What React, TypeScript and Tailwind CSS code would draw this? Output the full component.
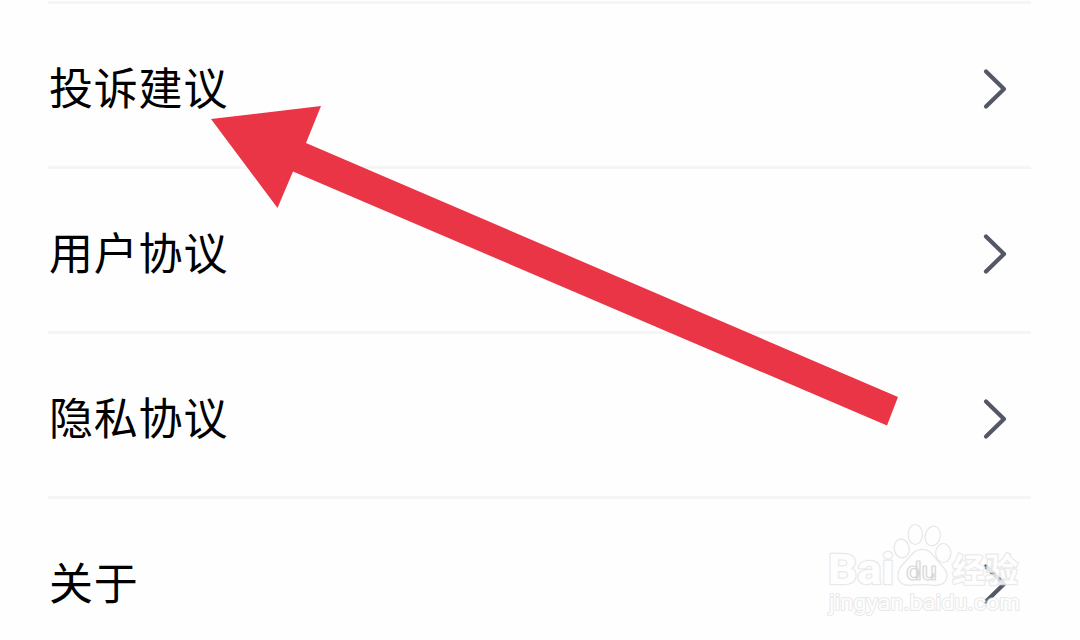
import React from 'react';

interface MenuItemProps {
  label: string;
}

const menuItems = ['投诉建议', '用户协议', '隐私协议', '关于'];

const MenuItem: React.FC<MenuItemProps> = ({ label }) => {
  return (
    <li className="flex h-[165px] items-center justify-between border-t-[3px] border-[#f5f5f5] pr-[22px]">
      <span className="ml-px pt-px text-[44px] leading-none tracking-[0.8px] text-black">{label}</span>
      <svg className="mt-2 h-11 w-7" viewBox="0 0 28 44" fill="none">
        <path
          d="M5 4.5 L23 22 L5 39.5"
          stroke="#535766"
          strokeWidth="4.2"
          strokeLinecap="round"
          strokeLinejoin="round"
        />
      </svg>
    </li>
  );
};

const Arrow: React.FC = () => (
  <svg className="absolute inset-0 h-[640px] w-[1080px]" viewBox="0 0 1080 640">
    <polygon points="211,119 321,106 306,143 898,397 887,425.5 293,171.5 277.5,208" fill="#ea3546" />
  </svg>
);

const Watermark: React.FC = () => (
  <svg
    className="absolute left-[810px] top-[510px] h-[130px] w-[240px]"
    viewBox="0 0 240 130"
    fill="#fefefe"
    stroke="#e6e6e6"
    strokeWidth="1.2"
  >
    {/* Paw */}
    <ellipse cx="91.7" cy="38.5" rx="7.5" ry="9.5" transform="rotate(-10 91.7 38.5)" />
    <ellipse cx="105.3" cy="24.5" rx="7.2" ry="10" />
    <ellipse cx="122.7" cy="26" rx="7.5" ry="10" transform="rotate(12 122.7 26)" />
    <ellipse cx="133.3" cy="43" rx="7.7" ry="9.5" />
    <path d="M112 39.3 C104 39.3 101 46 96 51 C90 57 88 60 88 66 C88 73 94 76 101 75.2 C109 74.5 115 74.5 122 75.2 C131 76.5 137 73 137 65 C137 59 131 56 127 50 C122 44 120 39.3 112 39.3 Z" />
    {/* Lettering, edge painted behind the fill */}
    <g
      className="opacity-85 [paint-order:stroke]"
      strokeWidth="2.4"
      strokeLinejoin="round"
      fontFamily="Roboto, sans-serif"
    >
      <text x="18" y="74" fontSize="43" fontWeight="800" textLength="66" lengthAdjust="spacingAndGlyphs">
        Bai
      </text>
      <text
        x="142"
        y="72"
        fontSize="33"
        fontWeight="700"
        fontFamily='"Noto Sans CJK SC", sans-serif'
        textLength="66"
        lengthAdjust="spacingAndGlyphs"
      >
        经验
      </text>
    </g>
    <g fontFamily="Roboto, sans-serif" strokeLinejoin="round">
      <text
        x="96"
        y="70"
        fontSize="25"
        fontWeight="500"
        stroke="#d8d8d8"
        textLength="31"
        lengthAdjust="spacingAndGlyphs"
      >
        du
      </text>
      <text
        x="19"
        y="100"
        fontSize="22.5"
        className="[paint-order:stroke]"
        stroke="#d0d0d0"
        strokeOpacity="0.45"
        strokeWidth="2.2"
        textLength="191"
        lengthAdjust="spacingAndGlyphs"
      >
        jingyan.baidu.com
      </text>
    </g>
  </svg>
);

export default function App() {
  return (
    <div className="relative h-[640px] w-[1080px] overflow-hidden bg-[#fefefe] font-['Noto_Sans_CJK_SC',sans-serif]">
      <ul className="mx-12 mt-px w-[983px]">
        {menuItems.map((label) => (
          <MenuItem key={label} label={label} />
        ))}
      </ul>
      <Arrow />
      <Watermark />
    </div>
  );
}
